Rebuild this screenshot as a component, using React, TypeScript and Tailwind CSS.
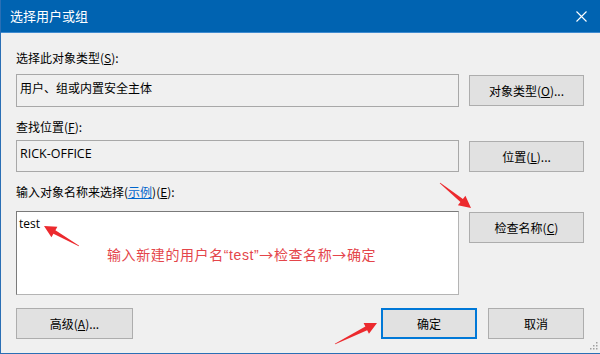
import React from 'react';

type Pt = [number, number];

// red annotation arrow: thin tail widening into a triangular head
function arrowPoints(tail: Pt, tip: Pt) {
  const dx = tip[0] - tail[0];
  const dy = tip[1] - tail[1];
  const len = Math.hypot(dx, dy);
  const ux = dx / len;
  const uy = dy / len;
  const nx = -uy;
  const ny = ux;
  const headLen = 12;
  const neck: Pt = [tip[0] - ux * headLen, tip[1] - uy * headLen];
  const p = (b: Pt, w: number): string => `${b[0] + nx * w},${b[1] + ny * w}`;
  return [
    p(tail, 0.4),
    p(neck, 2),
    p(neck, 6),
    `${tip[0]},${tip[1]}`,
    p(neck, -6),
    p(neck, -2),
    p(tail, -0.4),
  ].join(' ');
}

const arrows: Array<[Pt, Pt]> = [
  [[78, 246], [43, 226]],
  [[439, 183], [470, 208]],
  [[334, 344], [376, 323]],
];

function Button({ children, w, primary }: { children: React.ReactNode; w: string; primary?: boolean }) {
  return (
    <div
      className={`${w} h-[31px] flex items-center justify-center bg-[#e1e1e1] ${
        primary ? 'border-2 border-[#0078d7]' : 'border border-[#adadad]'
      }`}
    >
      {children}
    </div>
  );
}

export default function App() {
  return (
    <div className="relative w-[600px] h-[354px] overflow-hidden bg-[#f0f0f0] border-l border-b border-[#2a6fb5] text-[12px] leading-[16px] text-black font-['Noto_Sans_CJK_SC','Microsoft_YaHei',sans-serif]">
      <div className="h-[33px] bg-[#0063b1] flex items-center justify-between pl-[9px] pr-[13px] text-white border-b border-[#3f8bd0]">
        <span className="text-[13px]">选择用户或组</span>
        <svg width="11" height="11" viewBox="0 0 11 11" className="text-white">
          <path d="M0.5 0.5 L10.5 10.5 M10.5 0.5 L0.5 10.5" stroke="currentColor" strokeWidth="1.1" fill="none" />
        </svg>
      </div>

      <div className="pl-[15px] pr-[16px]">
        <div className="mt-[17px] h-[16px]">
          选择此对象类型(<u>S</u>):
        </div>
        <div className="mt-[8px] flex gap-[10px] items-start">
          <div className="w-[443px] h-[33px] border border-[#a8a8a8] bg-[#f0f0f0] pt-[5px] pl-[3px]">
            用户、组或内置安全主体
          </div>
          <div className="mt-[1px]">
            <Button w="w-[115px]">
              对象类型(<u>O</u>)...
            </Button>
          </div>
        </div>

        <div className="mt-[12px] h-[16px]">
          查找位置(<u>F</u>):
        </div>
        <div className="mt-[5px] flex gap-[10px] items-start">
          <div className="w-[443px] h-[32px] border border-[#a8a8a8] bg-[#f0f0f0] pt-[5px] pl-[3px] font-['Open_Sans',sans-serif] text-[12.5px]">
            RICK-OFFICE
          </div>
          <div className="mt-[1px]">
            <Button w="w-[115px]">
              位置(<u>L</u>)...
            </Button>
          </div>
        </div>

        <div className="mt-[12px] h-[16px]">
          输入对象名称来选择(<u className="text-[#0066cc]">示例</u>)(<u>E</u>):
        </div>
        <div className="mt-[11px] flex gap-[10px] items-start">
          <div className="w-[443px] h-[84px] border border-[#b4b4b4] border-t-[#7a7a7a] border-l-[#7a7a7a] bg-white pt-[4px] pl-[2px] font-['Open_Sans',sans-serif]">
            test
          </div>
          <div className="mt-[1px]">
            <Button w="w-[115px]">
              检查名称(<u>C</u>)
            </Button>
          </div>
        </div>

        <div className="mt-[13px] flex items-start justify-between">
          <Button w="w-[117px]">
            高级(<u>A</u>)...
          </Button>
          <div className="flex gap-[11px]">
            <Button w="w-[96px]" primary>
              确定
            </Button>
            <Button w="w-[96px]">取消</Button>
          </div>
        </div>
      </div>

      {/* annotation overlay */}
      <div className="absolute left-[106px] top-[245px] text-[14px] leading-[18px] tracking-[0.6px] text-[#e4454a]">
        输入新建的用户名<span className="font-['Liberation_Sans',sans-serif]">“test”</span>→检查名称→确定
      </div>
      <svg className="absolute left-0 top-0" width="600" height="354" viewBox="0 0 600 354">
        {arrows.map(([a, b], i) => (
          <polygon key={i} points={arrowPoints(a, b)} fill="#ec2a2e" />
        ))}
        {[
          [595, 342],
          [592, 345],
          [595, 345],
          [589, 348],
          [592, 348],
          [595, 348],
        ].map(([x, y], i) => (
          <rect key={i} x={x} y={y} width="1.5" height="1.5" fill="#a0a0a0" />
        ))}
      </svg>
    </div>
  );
}
